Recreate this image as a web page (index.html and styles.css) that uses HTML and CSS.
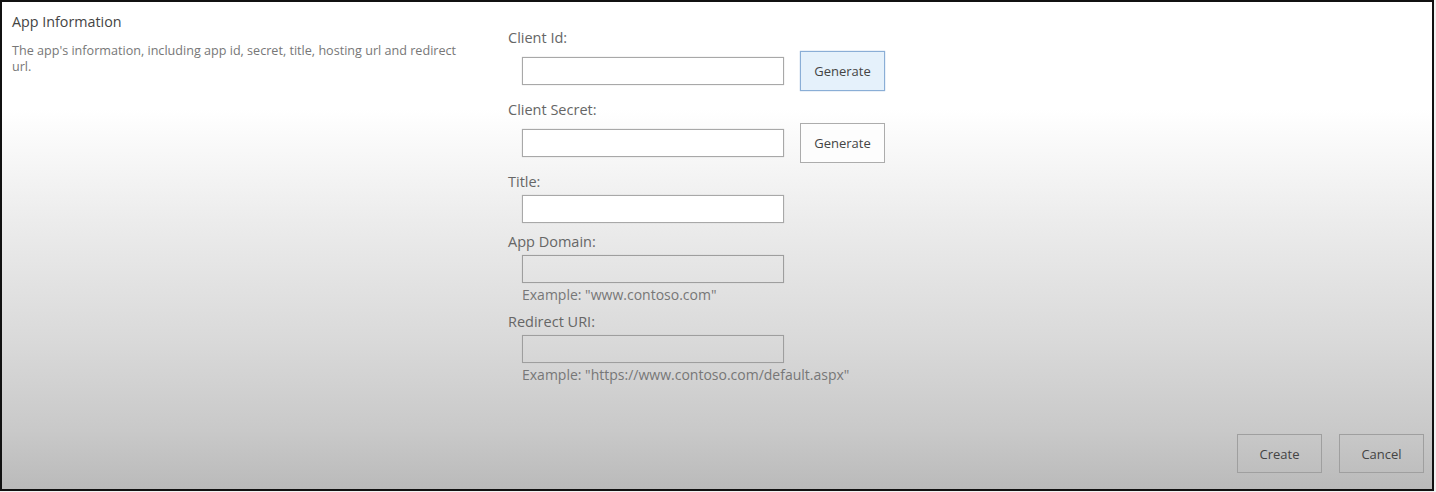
FILE: index.html
```html
<!DOCTYPE html>
<html lang="en">
    <head>
        <title>App Information</title>
        <meta charset="utf-8">
        <link rel="stylesheet" href="styles.css">
    </head>
    <body>
        <div class="frame">
            <div class="content">
                <section class="info">
                    <h3>App Information</h3>
                    <p>The app's information, including app id, secret, title, hosting url and redirect url.</p>
                </section>
                <form class="fields">
                    <div class="field">
                        <label>Client Id:</label>
                        <div class="row">
                            <input type="text" class="box">
                            <button type="button" class="btn btn-focus">Generate</button>
                        </div>
                    </div>
                    <div class="field">
                        <label>Client Secret:</label>
                        <div class="row">
                            <input type="text" class="box">
                            <button type="button" class="btn">Generate</button>
                        </div>
                    </div>
                    <div class="field">
                        <label>Title:</label>
                        <div class="row">
                            <input type="text" class="box">
                        </div>
                    </div>
                    <div class="field">
                        <label>App Domain:</label>
                        <div class="row">
                            <input type="text" class="box box-dim">
                        </div>
                        <span class="hint">Example: "www.contoso.com"</span>
                    </div>
                    <div class="field">
                        <label>Redirect URI:</label>
                        <div class="row">
                            <input type="text" class="box box-dim">
                        </div>
                        <span class="hint">Example: "https://www.contoso.com/default.aspx"</span>
                    </div>
                </form>
            </div>
            <div class="actions">
                <button type="button" class="btn btn-flat">Create</button>
                <button type="button" class="btn btn-flat">Cancel</button>
            </div>
        </div>
    </body>
</html>
```

FILE: styles.css
```css
* {
    margin: 0;
    padding: 0;
    box-sizing: border-box;
}
body {
    background-color: #f2f2f2;
    font-family: "Open Sans", "Noto Sans", sans-serif;
}
.frame {
    width: 1434px;
    height: 491px;
    border: 2px solid #111;
    display: flex;
    flex-direction: column;
    background: linear-gradient(#ffffff 0%, #ffffff 22%, #ececec 45%, #d9d9d9 70%, #c9c9c9 88%, #bababa 100%);
}
.content {
    display: grid;
    grid-template-columns: 506px 1fr;
}
.info {
    padding: 11px 10px 0 10px;
}
.info h3 {
    font-size: 14.3px;
    font-weight: normal;
    color: #444;
    line-height: 18px;
    margin-bottom: 12px;
}
.info p {
    font-size: 12.6px;
    line-height: 16px;
    color: #777;
    width: 456px;
}
.fields {
    padding-top: 27px;
    display: flex;
    flex-direction: column;
    gap: 10px;
}
.field {
    display: flex;
    flex-direction: column;
}
.field label {
    font-size: 14.5px;
    line-height: 18px;
    color: #666;
    margin-bottom: 4px;
}
.row {
    display: flex;
    align-items: center;
    padding-left: 14px;
}
.box {
    width: 262px;
    height: 28px;
    border: 1px solid #a8a8a8;
    background-color: #fff;
    box-shadow: 0 0 1px #c4c4c4;
}
.box-dim {
    background-color: transparent;
    border-color: #9e9e9e;
}
.hint {
    font-size: 14px;
    line-height: 16px;
    color: #777;
    padding-left: 14px;
    margin-top: 4px;
}
.btn {
    width: 85px;
    height: 40px;
    margin-left: 16px;
    border: 1px solid #acacac;
    background-color: #fdfdfd;
    font-family: inherit;
    font-size: 13px;
    color: #444;
}
.btn-focus {
    background-color: #e5f1fb;
    border-color: #8aaed6;
    box-shadow: 0 0 1px #8aaed6;
}
.actions {
    margin-top: auto;
    display: flex;
    justify-content: flex-end;
    gap: 17px;
    padding: 0 8px 16px 0;
}
.btn-flat {
    margin-left: 0;
    height: 39px;
    background-color: transparent;
    border-color: #9f9f9f;
}
```
